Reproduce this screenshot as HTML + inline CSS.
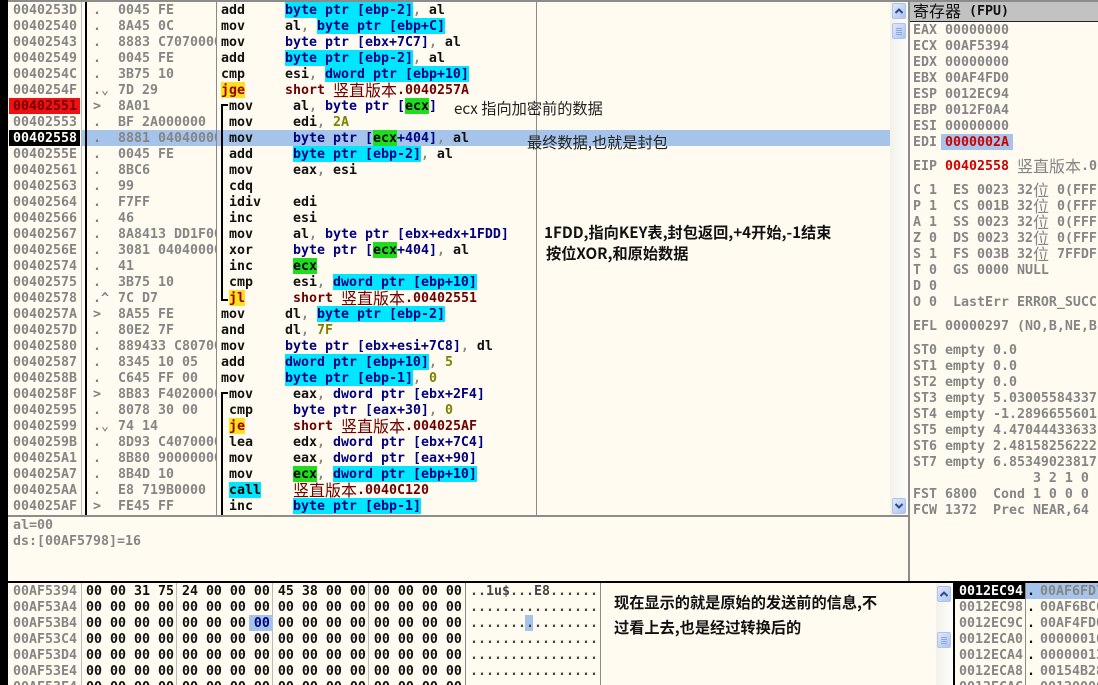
<!DOCTYPE html>
<html style="overflow:hidden;height:685px"><head><meta charset="utf-8"><style>
html,body{margin:0;padding:0}
body{width:1098px;height:685px;overflow:hidden;background:#fffbf0;position:relative;font:bold 13.29px/18px "DejaVu Sans Mono","Liberation Mono","Noto Sans CJK SC",monospace;color:#000}
div,b,u,s,em{position:absolute;white-space:pre;text-decoration:none;font-style:normal;font-weight:inherit}
svg{position:absolute}
.r{left:0;width:890px;height:16px;margin-top:1px}
.a{left:13px;color:#858585}
.d{left:93px;color:#808080}
.h{left:118px;width:98px;overflow:hidden;color:#858585}
.m{left:221px;color:#111}
.o{left:285px;color:#111}
.i .m{left:229px}.i .o{left:293px}
span{white-space:pre}
.c{background:#00e6ff;color:#000080;display:inline-block;height:16px}
.g{background:#1fdc1f;color:#000;display:inline-block;height:16px}
.y{background:#ffe020;color:#900;display:inline-block;height:16px}
.n{color:#000080}.f{color:#888}.l{color:#808000}.k{color:#700000}
.z{font:400 16px/16px "Noto Sans CJK SC",sans-serif;display:inline-block;width:16px;text-align:center;vertical-align:top;position:relative;top:-1px}
.v{background:#8a8a8a}
.t{font:400 15.2px/20px "Noto Sans CJK SC","Liberation Sans",sans-serif;color:#222}
.tb{font-weight:700;color:#111}
.w{color:#858585;left:913px}
.x{left:13px;color:#858585}
.hx{left:86px;color:#111}
.as{left:470px;color:#444}
.btn{left:892px;width:12px;height:14px;background:linear-gradient(135deg,#dfe8fb,#aec4f0);border:1px solid #b0c4ea;border-radius:2px}
</style></head><body>

<!-- frame -->
<div style="left:0;top:0;width:8px;height:685px;background:#000"></div>
<div style="left:8px;top:0;width:1090px;height:2px;background:#8c8c8c"></div>

<!-- selected row -->
<div style="left:81px;top:130px;width:809px;height:16px;background:#a6c4ea"></div>
<!-- address highlights -->
<div style="left:9px;top:98px;width:71px;height:16px;background:#ee1111"></div>
<div style="left:9px;top:130px;width:71px;height:16px;background:#000"></div>

<!-- column lines -->
<div class="v" style="left:81px;top:2px;width:1px;height:514px;background:#bbb"></div>
<div style="left:85px;top:2px;width:2px;height:514px;background:#000"></div>
<div class="v" style="left:216px;top:2px;width:1px;height:514px"></div>
<div class="v" style="left:536px;top:2px;width:1px;height:514px"></div>

<!-- jump brackets -->
<div style="left:221px;top:104px;width:2px;height:197px;background:#000"></div>
<div style="left:221px;top:104px;width:7px;height:2px;background:#000"></div>
<div style="left:221px;top:299px;width:7px;height:2px;background:#000"></div>
<div style="left:221px;top:392px;width:2px;height:124px;background:#000"></div>
<div style="left:221px;top:392px;width:7px;height:2px;background:#000"></div>

<!-- disassembly -->
<div class="r" style="top:1px"><b class="a">0040253D</b><b class="d">.</b><b class="h">0045 FE</b><b class="m">add</b><b class="o"><span class="c">byte ptr [ebp-2]</span><span class="f">,</span> al</b></div>
<div class="r" style="top:17px"><b class="a">00402540</b><b class="d">.</b><b class="h">8A45 0C</b><b class="m">mov</b><b class="o">al<span class="f">,</span> <span class="c">byte ptr [ebp+C]</span></b></div>
<div class="r" style="top:33px"><b class="a">00402543</b><b class="d">.</b><b class="h">8883 C7070000</b><b class="m">mov</b><b class="o"><span class="n">byte ptr [ebx+7C7]</span><span class="f">,</span> al</b></div>
<div class="r" style="top:49px"><b class="a">00402549</b><b class="d">.</b><b class="h">0045 FE</b><b class="m">add</b><b class="o"><span class="c">byte ptr [ebp-2]</span><span class="f">,</span> al</b></div>
<div class="r" style="top:65px"><b class="a">0040254C</b><b class="d">.</b><b class="h">3B75 10</b><b class="m">cmp</b><b class="o">esi<span class="f">,</span> <span class="c">dword ptr [ebp+10]</span></b></div>
<div class="r" style="top:81px"><b class="a">0040254F</b><b class="d">.⌄</b><b class="h">7D 29</b><b class="m"><span class="y">jge</span></b><b class="o k">short <span class="z">竖</span><span class="z">直</span><span class="z">版</span><span class="z">本</span>.0040257A</b></div>
<div class="r i" style="top:97px"><b class="a" style="color:#700">00402551</b><b class="d">&gt;</b><b class="h">8A01</b><b class="m">mov</b><b class="o">al<span class="f">,</span> <span class="n">byte ptr [</span><span class="g">ecx</span><span class="n">]</span></b></div>
<div class="r i" style="top:113px"><b class="a">00402553</b><b class="d">.</b><b class="h">BF 2A000000</b><b class="m">mov</b><b class="o">edi<span class="f">,</span> <span class="l">2A</span></b></div>
<div class="r i" style="top:129px"><b class="a" style="color:#fff">00402558</b><b class="d">.</b><b class="h">8881 04040000</b><b class="m">mov</b><b class="o"><span class="n">byte ptr [</span><span class="g">ecx</span><span class="n">+404]</span><span class="f">,</span> al</b></div>
<div class="r i" style="top:145px"><b class="a">0040255E</b><b class="d">.</b><b class="h">0045 FE</b><b class="m">add</b><b class="o"><span class="c">byte ptr [ebp-2]</span><span class="f">,</span> al</b></div>
<div class="r i" style="top:161px"><b class="a">00402561</b><b class="d">.</b><b class="h">8BC6</b><b class="m">mov</b><b class="o">eax<span class="f">,</span> esi</b></div>
<div class="r i" style="top:177px"><b class="a">00402563</b><b class="d">.</b><b class="h">99</b><b class="m">cdq</b></div>
<div class="r i" style="top:193px"><b class="a">00402564</b><b class="d">.</b><b class="h">F7FF</b><b class="m">idiv</b><b class="o">edi</b></div>
<div class="r i" style="top:209px"><b class="a">00402566</b><b class="d">.</b><b class="h">46</b><b class="m">inc</b><b class="o">esi</b></div>
<div class="r i" style="top:225px"><b class="a">00402567</b><b class="d">.</b><b class="h">8A8413 DD1F0000</b><b class="m">mov</b><b class="o">al<span class="f">,</span> <span class="n">byte ptr [ebx+edx+1FDD]</span></b></div>
<div class="r i" style="top:241px"><b class="a">0040256E</b><b class="d">.</b><b class="h">3081 04040000</b><b class="m">xor</b><b class="o"><span class="n">byte ptr [</span><span class="g">ecx</span><span class="n">+404]</span><span class="f">,</span> al</b></div>
<div class="r i" style="top:257px"><b class="a">00402574</b><b class="d">.</b><b class="h">41</b><b class="m">inc</b><b class="o"><span class="g">ecx</span></b></div>
<div class="r i" style="top:273px"><b class="a">00402575</b><b class="d">.</b><b class="h">3B75 10</b><b class="m">cmp</b><b class="o">esi<span class="f">,</span> <span class="c">dword ptr [ebp+10]</span></b></div>
<div class="r i" style="top:289px"><b class="a">00402578</b><b class="d">.^</b><b class="h">7C D7</b><b class="m"><span class="y">jl</span></b><b class="o k">short <span class="z">竖</span><span class="z">直</span><span class="z">版</span><span class="z">本</span>.00402551</b></div>
<div class="r" style="top:305px"><b class="a">0040257A</b><b class="d">&gt;</b><b class="h">8A55 FE</b><b class="m">mov</b><b class="o">dl<span class="f">,</span> <span class="c">byte ptr [ebp-2]</span></b></div>
<div class="r" style="top:321px"><b class="a">0040257D</b><b class="d">.</b><b class="h">80E2 7F</b><b class="m">and</b><b class="o">dl<span class="f">,</span> <span class="l">7F</span></b></div>
<div class="r" style="top:337px"><b class="a">00402580</b><b class="d">.</b><b class="h">889433 C8070000</b><b class="m">mov</b><b class="o"><span class="n">byte ptr [ebx+esi+7C8]</span><span class="f">,</span> dl</b></div>
<div class="r" style="top:353px"><b class="a">00402587</b><b class="d">.</b><b class="h">8345 10 05</b><b class="m">add</b><b class="o"><span class="c">dword ptr [ebp+10]</span><span class="f">,</span> <span class="l">5</span></b></div>
<div class="r" style="top:369px"><b class="a">0040258B</b><b class="d">.</b><b class="h">C645 FF 00</b><b class="m">mov</b><b class="o"><span class="c">byte ptr [ebp-1]</span><span class="f">,</span> <span class="l">0</span></b></div>
<div class="r i" style="top:385px"><b class="a">0040258F</b><b class="d">&gt;</b><b class="h">8B83 F4020000</b><b class="m">mov</b><b class="o">eax<span class="f">,</span> <span class="n">dword ptr [ebx+2F4]</span></b></div>
<div class="r i" style="top:401px"><b class="a">00402595</b><b class="d">.</b><b class="h">8078 30 00</b><b class="m">cmp</b><b class="o"><span class="n">byte ptr [eax+30]</span><span class="f">,</span> <span class="l">0</span></b></div>
<div class="r i" style="top:417px"><b class="a">00402599</b><b class="d">.⌄</b><b class="h">74 14</b><b class="m"><span class="y">je</span></b><b class="o k">short <span class="z">竖</span><span class="z">直</span><span class="z">版</span><span class="z">本</span>.004025AF</b></div>
<div class="r i" style="top:433px"><b class="a">0040259B</b><b class="d">.</b><b class="h">8D93 C4070000</b><b class="m">lea</b><b class="o">edx<span class="f">,</span> <span class="n">dword ptr [ebx+7C4]</span></b></div>
<div class="r i" style="top:449px"><b class="a">004025A1</b><b class="d">.</b><b class="h">8B80 90000000</b><b class="m">mov</b><b class="o">eax<span class="f">,</span> <span class="n">dword ptr [eax+90]</span></b></div>
<div class="r i" style="top:465px"><b class="a">004025A7</b><b class="d">.</b><b class="h">8B4D 10</b><b class="m">mov</b><b class="o"><span class="g">ecx</span><span class="f">,</span> <span class="c">dword ptr [ebp+10]</span></b></div>
<div class="r i" style="top:481px"><b class="a">004025AA</b><b class="d">.</b><b class="h">E8 719B0000</b><b class="m"><span class="c" style="color:#000">call</span></b><b class="o k"><span class="z">竖</span><span class="z">直</span><span class="z">版</span><span class="z">本</span>.0040C120</b></div>
<div class="r i" style="top:497px"><b class="a">004025AF</b><b class="d">&gt;</b><b class="h">FE45 FF</b><b class="m">inc</b><b class="o"><span class="c">byte ptr [ebp-1]</span></b></div>

<!-- annotations -->
<div class="t" style="left:454px;top:98px">ecx 指向加密前的数据</div>
<div class="t" style="left:527px;top:132px">最终数据,也就是封包</div>
<div class="t tb" style="left:544px;top:222px">1FDD,指向KEY表,封包返回,+4开始,-1结束</div>
<div class="t tb" style="left:546px;top:243px">按位XOR,和原始数据</div>

<!-- disasm scrollbar -->
<div style="left:890px;top:2px;width:18px;height:514px;background:linear-gradient(90deg,#f2f1ea,#fefefb)"></div>
<div class="btn" style="top:3px"></div>
<svg style="left:892px;top:3px" width="14" height="16"><path d="M3.5 10 L7 6.5 L10.5 10" fill="none" stroke="#2a4a90" stroke-width="2"/></svg>
<div class="btn" style="top:23px"></div>
<svg style="left:892px;top:23px" width="14" height="16"><path d="M4 5.5H10M4 7.5H10M4 9.5H10M4 11.5H10" stroke="#8ea6d8" stroke-width="1"/></svg>
<div class="btn" style="top:498px"></div>
<svg style="left:892px;top:498px" width="14" height="16"><path d="M3.5 6 L7 9.5 L10.5 6" fill="none" stroke="#2a4a90" stroke-width="2"/></svg>
<div style="left:908px;top:0;width:2px;height:582px;background:#8c8c8c"></div>

<!-- registers -->
<div style="left:910px;top:2px;width:188px;height:19px;background:#c2c2c2"></div>
<div style="left:910px;top:21px;width:188px;height:1px;background:#222"></div>
<div style="left:913px;top:3px;color:#111"><span class="z">寄</span><span class="z">存</span><span class="z">器</span> (FPU)</div>
<div class="w" style="top:22px">EAX 00000000</div>
<div class="w" style="top:38px">ECX 00AF5394</div>
<div class="w" style="top:54px">EDX 00000000</div>
<div class="w" style="top:70px">EBX 00AF4FD0</div>
<div class="w" style="top:86px">ESP 0012EC94</div>
<div class="w" style="top:102px">EBP 0012F0A4</div>
<div class="w" style="top:118px">ESI 00000000</div>
<div style="left:941px;top:134px;width:72px;height:16px;background:#a6c4ea"></div>
<div class="w" style="top:134px">EDI <span style="color:#c00">0000002A</span></div>
<div class="w" style="top:158px">EIP <span style="color:#c00">00402558</span> <span class="z">竖</span><span class="z">直</span><span class="z">版</span><span class="z">本</span>.0</div>
<div class="w" style="top:182px">C 1  ES 0023 32<span class="z">位</span> 0(FFF</div>
<div class="w" style="top:198px">P 1  CS 001B 32<span class="z">位</span> 0(FFF</div>
<div class="w" style="top:214px">A 1  SS 0023 32<span class="z">位</span> 0(FFF</div>
<div class="w" style="top:230px">Z 0  DS 0023 32<span class="z">位</span> 0(FFF</div>
<div class="w" style="top:246px">S 1  FS 003B 32<span class="z">位</span> 7FFDF</div>
<div class="w" style="top:262px">T 0  GS 0000 NULL</div>
<div class="w" style="top:278px">D 0</div>
<div class="w" style="top:294px">O 0  LastErr ERROR_SUCC</div>
<div class="w" style="top:318px">EFL 00000297 (NO,B,NE,B</div>
<div class="w" style="top:342px">ST0 empty 0.0</div>
<div class="w" style="top:358px">ST1 empty 0.0</div>
<div class="w" style="top:374px">ST2 empty 0.0</div>
<div class="w" style="top:390px">ST3 empty 5.03005584337</div>
<div class="w" style="top:406px">ST4 empty -1.2896655601</div>
<div class="w" style="top:422px">ST5 empty 4.47044433633</div>
<div class="w" style="top:438px">ST6 empty 2.48158256222</div>
<div class="w" style="top:454px">ST7 empty 6.85349023817</div>
<div class="w" style="top:470px">               3 2 1 0</div>
<div class="w" style="top:486px">FST 6800  Cond 1 0 0 0</div>
<div class="w" style="top:502px">FCW 1372  Prec NEAR,64</div>

<!-- info pane -->
<div style="left:8px;top:515px;width:900px;height:2px;background:#8c8c8c"></div>
<div class="x" style="top:517px">al=00</div>
<div class="x" style="top:533px">ds:[00AF5798]=16</div>

<!-- dump -->
<div style="left:8px;top:581px;width:1090px;height:2px;background:#000"></div>
<div style="left:81px;top:583px;width:1px;height:102px;background:#bbb"></div>
<div style="left:176px;top:583px;width:1px;height:102px;background:#bbb"></div>
<div style="left:272px;top:583px;width:1px;height:102px;background:#bbb"></div>
<div style="left:368px;top:583px;width:1px;height:102px;background:#bbb"></div>
<div class="v" style="left:465px;top:583px;width:1px;height:102px"></div>
<div class="v" style="left:600px;top:583px;width:1px;height:102px"></div>
<div style="left:249px;top:615px;width:24px;height:16px;background:#a6c4ea"></div>
<div style="left:525px;top:615px;width:8px;height:16px;background:#a6c4ea"></div>
<div class="x" style="top:583px">00AF5394</div><div class="hx" style="top:583px">00 00 31 75 24 00 00 00 45 38 00 00 00 00 00 00</div><div class="as" style="top:583px">..1u$...E8......</div>
<div class="x" style="top:599px">00AF53A4</div><div class="hx" style="top:599px">00 00 00 00 00 00 00 00 00 00 00 00 00 00 00 00</div><div class="as" style="top:599px">................</div>
<div class="x" style="top:615px">00AF53B4</div><div class="hx" style="top:615px">00 00 00 00 00 00 00 <span class="n">00</span> 00 00 00 00 00 00 00 00</div><div class="as" style="top:615px">................</div>
<div class="x" style="top:631px">00AF53C4</div><div class="hx" style="top:631px">00 00 00 00 00 00 00 00 00 00 00 00 00 00 00 00</div><div class="as" style="top:631px">................</div>
<div class="x" style="top:647px">00AF53D4</div><div class="hx" style="top:647px">00 00 00 00 00 00 00 00 00 00 00 00 00 00 00 00</div><div class="as" style="top:647px">................</div>
<div class="x" style="top:663px">00AF53E4</div><div class="hx" style="top:663px">00 00 00 00 00 00 00 00 00 00 00 00 00 00 00 00</div><div class="as" style="top:663px">................</div>
<div class="x" style="top:679px">00AF53F4</div><div class="hx" style="top:679px">00 00 00 00 00 00 00 00 00 00 00 00 00 00 00 00</div><div class="as" style="top:679px">................</div>
<div class="t tb" style="left:614px;top:592px">现在显示的就是原始的发送前的信息,不</div>
<div class="t tb" style="left:614px;top:617px">过看上去,也是经过转换后的</div>

<!-- dump scrollbar -->
<div style="left:936px;top:583px;width:17px;height:102px;background:linear-gradient(90deg,#f2f1ea,#fefefb)"></div>
<div class="btn" style="left:937px;top:586px"></div>
<svg style="left:937px;top:586px" width="14" height="16"><path d="M3.5 10 L7 6.5 L10.5 10" fill="none" stroke="#2a4a90" stroke-width="2"/></svg>
<div class="btn" style="left:937px;top:632px"></div>
<svg style="left:937px;top:632px" width="14" height="16"><path d="M4 5.5H10M4 7.5H10M4 9.5H10M4 11.5H10" stroke="#8ea6d8" stroke-width="1"/></svg>

<!-- stack -->
<div style="left:953px;top:583px;width:2px;height:102px;background:#000"></div>
<div style="left:955px;top:583px;width:70px;height:16px;background:#000"></div>
<div style="left:1026px;top:583px;width:72px;height:16px;background:#a6c4ea"></div>
<div class="v" style="left:1025px;top:583px;width:1px;height:102px"></div>
<div class="x" style="left:959px;top:583px;color:#fff">0012EC94</div><div class="x" style="left:1027px;top:583px;color:#111">.</div><div class="x" style="left:1040px;top:583px">00AF6FD7</div>
<div class="x" style="left:959px;top:599px">0012EC98</div><div class="x" style="left:1027px;top:599px;color:#111">.</div><div class="x" style="left:1040px;top:599px">00AF6BC6</div>
<div class="x" style="left:959px;top:615px">0012EC9C</div><div class="x" style="left:1027px;top:615px;color:#111">.</div><div class="x" style="left:1040px;top:615px">00AF4FD0</div>
<div class="x" style="left:959px;top:631px">0012ECA0</div><div class="x" style="left:1027px;top:631px;color:#111">.</div><div class="x" style="left:1040px;top:631px">00000016</div>
<div class="x" style="left:959px;top:647px">0012ECA4</div><div class="x" style="left:1027px;top:647px;color:#111">.</div><div class="x" style="left:1040px;top:647px">00000013</div>
<div class="x" style="left:959px;top:663px">0012ECA8</div><div class="x" style="left:1027px;top:663px;color:#111">.</div><div class="x" style="left:1040px;top:663px">00154B28</div>
<div class="x" style="left:959px;top:679px">0012ECAC</div><div class="x" style="left:1027px;top:679px;color:#111">.</div><div class="x" style="left:1040px;top:679px">00120000</div>
</body></html>
